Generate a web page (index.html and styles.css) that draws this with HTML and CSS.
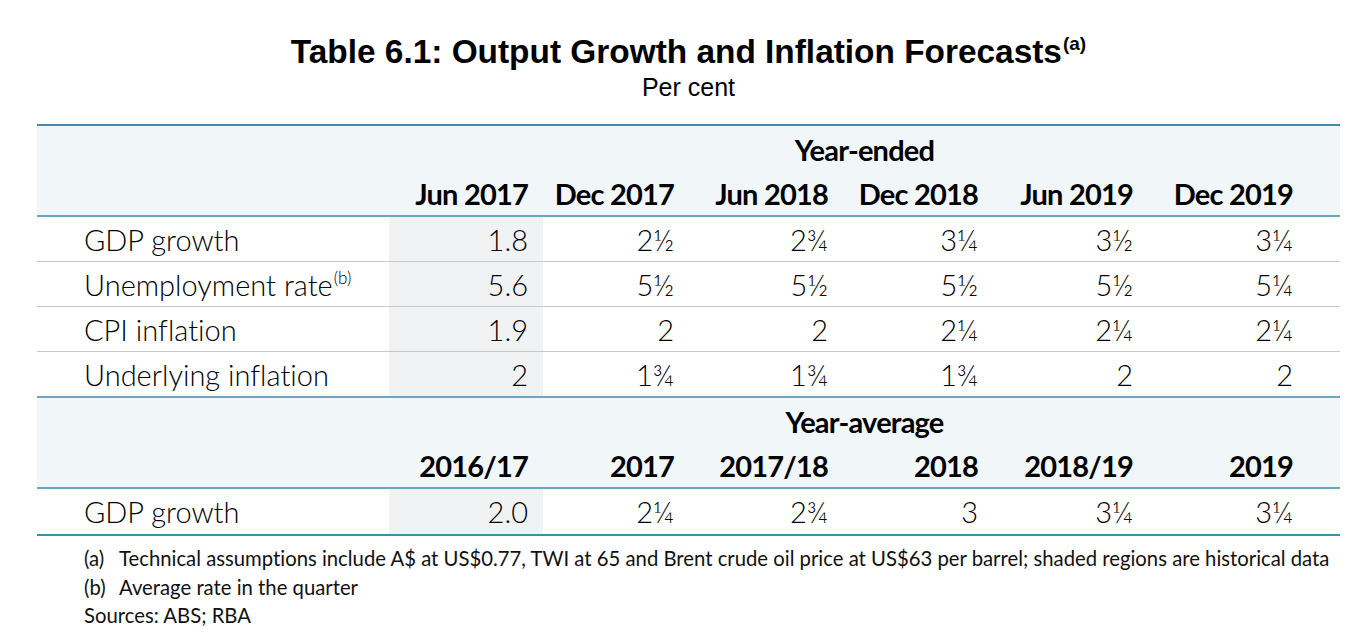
FILE: index.html
```html
<!DOCTYPE html>
<html lang="en">
<head>
<meta charset="utf-8">
<title>Table 6.1</title>
<link rel="stylesheet" href="styles.css">
</head>
<body>
<div class="page">
  <header class="caption">
    <h1 class="title">Table 6.1: Output Growth and Inflation Forecasts<sup class="title-note">(a)</sup></h1>
    <p class="unit">Per cent</p>
  </header>
  <table class="forecast">
    <colgroup>
      <col class="c-label"><col class="c1"><col class="c2"><col class="c3"><col class="c4"><col class="c5"><col class="c6">
    </colgroup>
    <thead>
      <tr class="group-row first">
        <th class="blank"></th>
        <th class="group" colspan="6">Year-ended</th>
      </tr>
      <tr class="col-row">
        <th class="blank"></th>
        <th class="num">Jun 2017</th>
        <th class="num">Dec 2017</th>
        <th class="num">Jun 2018</th>
        <th class="num">Dec 2018</th>
        <th class="num">Jun 2019</th>
        <th class="num last">Dec 2019</th>
      </tr>
    </thead>
    <tbody>
      <tr>
        <td class="label">GDP growth</td>
        <td class="num hist">1.8</td><td class="num">2½</td><td class="num">2¾</td><td class="num">3¼</td><td class="num">3½</td><td class="num last">3¼</td>
      </tr>
      <tr>
        <td class="label">Unemployment rate<sup class="note">(b)</sup></td>
        <td class="num hist">5.6</td><td class="num">5½</td><td class="num">5½</td><td class="num">5½</td><td class="num">5½</td><td class="num last">5¼</td>
      </tr>
      <tr>
        <td class="label">CPI inflation</td>
        <td class="num hist">1.9</td><td class="num">2</td><td class="num">2</td><td class="num">2¼</td><td class="num">2¼</td><td class="num last">2¼</td>
      </tr>
      <tr class="end">
        <td class="label">Underlying inflation</td>
        <td class="num hist">2</td><td class="num">1¾</td><td class="num">1¾</td><td class="num">1¾</td><td class="num">2</td><td class="num last">2</td>
      </tr>
    </tbody>
    <tbody class="subhead">
      <tr class="group-row">
        <th class="blank"></th>
        <th class="group" colspan="6">Year-average</th>
      </tr>
      <tr class="col-row">
        <th class="blank"></th>
        <th class="num">2016/17</th>
        <th class="num">2017</th>
        <th class="num">2017/18</th>
        <th class="num">2018</th>
        <th class="num">2018/19</th>
        <th class="num last">2019</th>
      </tr>
    </tbody>
    <tbody>
      <tr class="final">
        <td class="label">GDP growth</td>
        <td class="num hist">2.0</td><td class="num">2¼</td><td class="num">2¾</td><td class="num">3</td><td class="num">3¼</td><td class="num last">3¼</td>
      </tr>
    </tbody>
  </table>
  <div class="notes">
    <p><span class="mark">(a)</span>Technical assumptions include A$ at US$0.77, TWI at 65 and Brent crude oil price at US$63 per barrel; shaded regions are historical data</p>
    <p><span class="mark">(b)</span>Average rate in the quarter</p>
    <p>Sources: ABS; RBA</p>
  </div>
</div>
</body>
</html>
```
FILE: styles.css
```css
html, body {
  margin: 0;
  padding: 0;
  background: #ffffff;
}
.page {
  width: 1303px;
  padding: 34px 0 0 37px;
  color: #111;
}
.caption {
  text-align: center;
  font-family: "Liberation Sans", Arial, sans-serif;
  color: #000;
}
.title {
  margin: 0;
  font-size: 33.4px;
  line-height: 36px;
  font-weight: 700;
}
.title-note {
  font-size: 19px;
  line-height: 0;
  vertical-align: 0;
  position: relative;
  top: -13px;
  margin-left: 1px;
}
.unit {
  margin: 0;
  font-size: 25px;
  line-height: 34px;
}
.forecast {
  margin-top: 20px;
  width: 1303px;
  border-collapse: collapse;
  table-layout: fixed;
  font-family: Lato, "Open Sans", sans-serif;
  font-size: 29px;
  font-weight: 300;
  font-variant-ligatures: none;
  color: #000;
}
.c-label { width: 352px; }
.c1 { width: 154px; }
.c2 { width: 146px; }
.c3 { width: 154px; }
.c4 { width: 150px; }
.c5 { width: 155px; }
.c6 { width: 192px; }
thead tr.first th { border-top: 2px solid #3e8eab; }
.group-row th, .col-row th {
  background: #f1f6f9;
  font-weight: 700;
  letter-spacing: -0.8px;
  padding: 0;
}
.group-row th { height: 46px; }
.col-row th { height: 43px; border-bottom: 2px solid #6aa8bf; }
.group { text-align: center; }
th.num, td.num {
  text-align: right;
  padding: 0 15px 0 0;
}
th.num.last, td.num.last { padding-right: 47px; }
td {
  height: 44px;
  padding: 0;
  border-bottom: 1px solid #c8c8c8;
}
tr.end td { border-bottom: 2px solid #6aa8bf; }
tr.final td { border-bottom: 2px solid #3e8eab; height: 45px; }
td.label { padding-left: 47px; }
td.hist { background: #f1f2f4; }
.note {
  font-size: 17px;
  line-height: 0;
  vertical-align: 0;
  position: relative;
  top: -12px;
  margin-left: 1px;
}
.notes {
  padding: 8px 0 0 47px;
  font-family: Lato, "Open Sans", sans-serif;
  font-size: 20.3px;
  line-height: 28.5px;
  font-variant-ligatures: none;
}
.notes p { margin: 0; white-space: nowrap; }
.mark { display: inline-block; width: 35px; }
```
